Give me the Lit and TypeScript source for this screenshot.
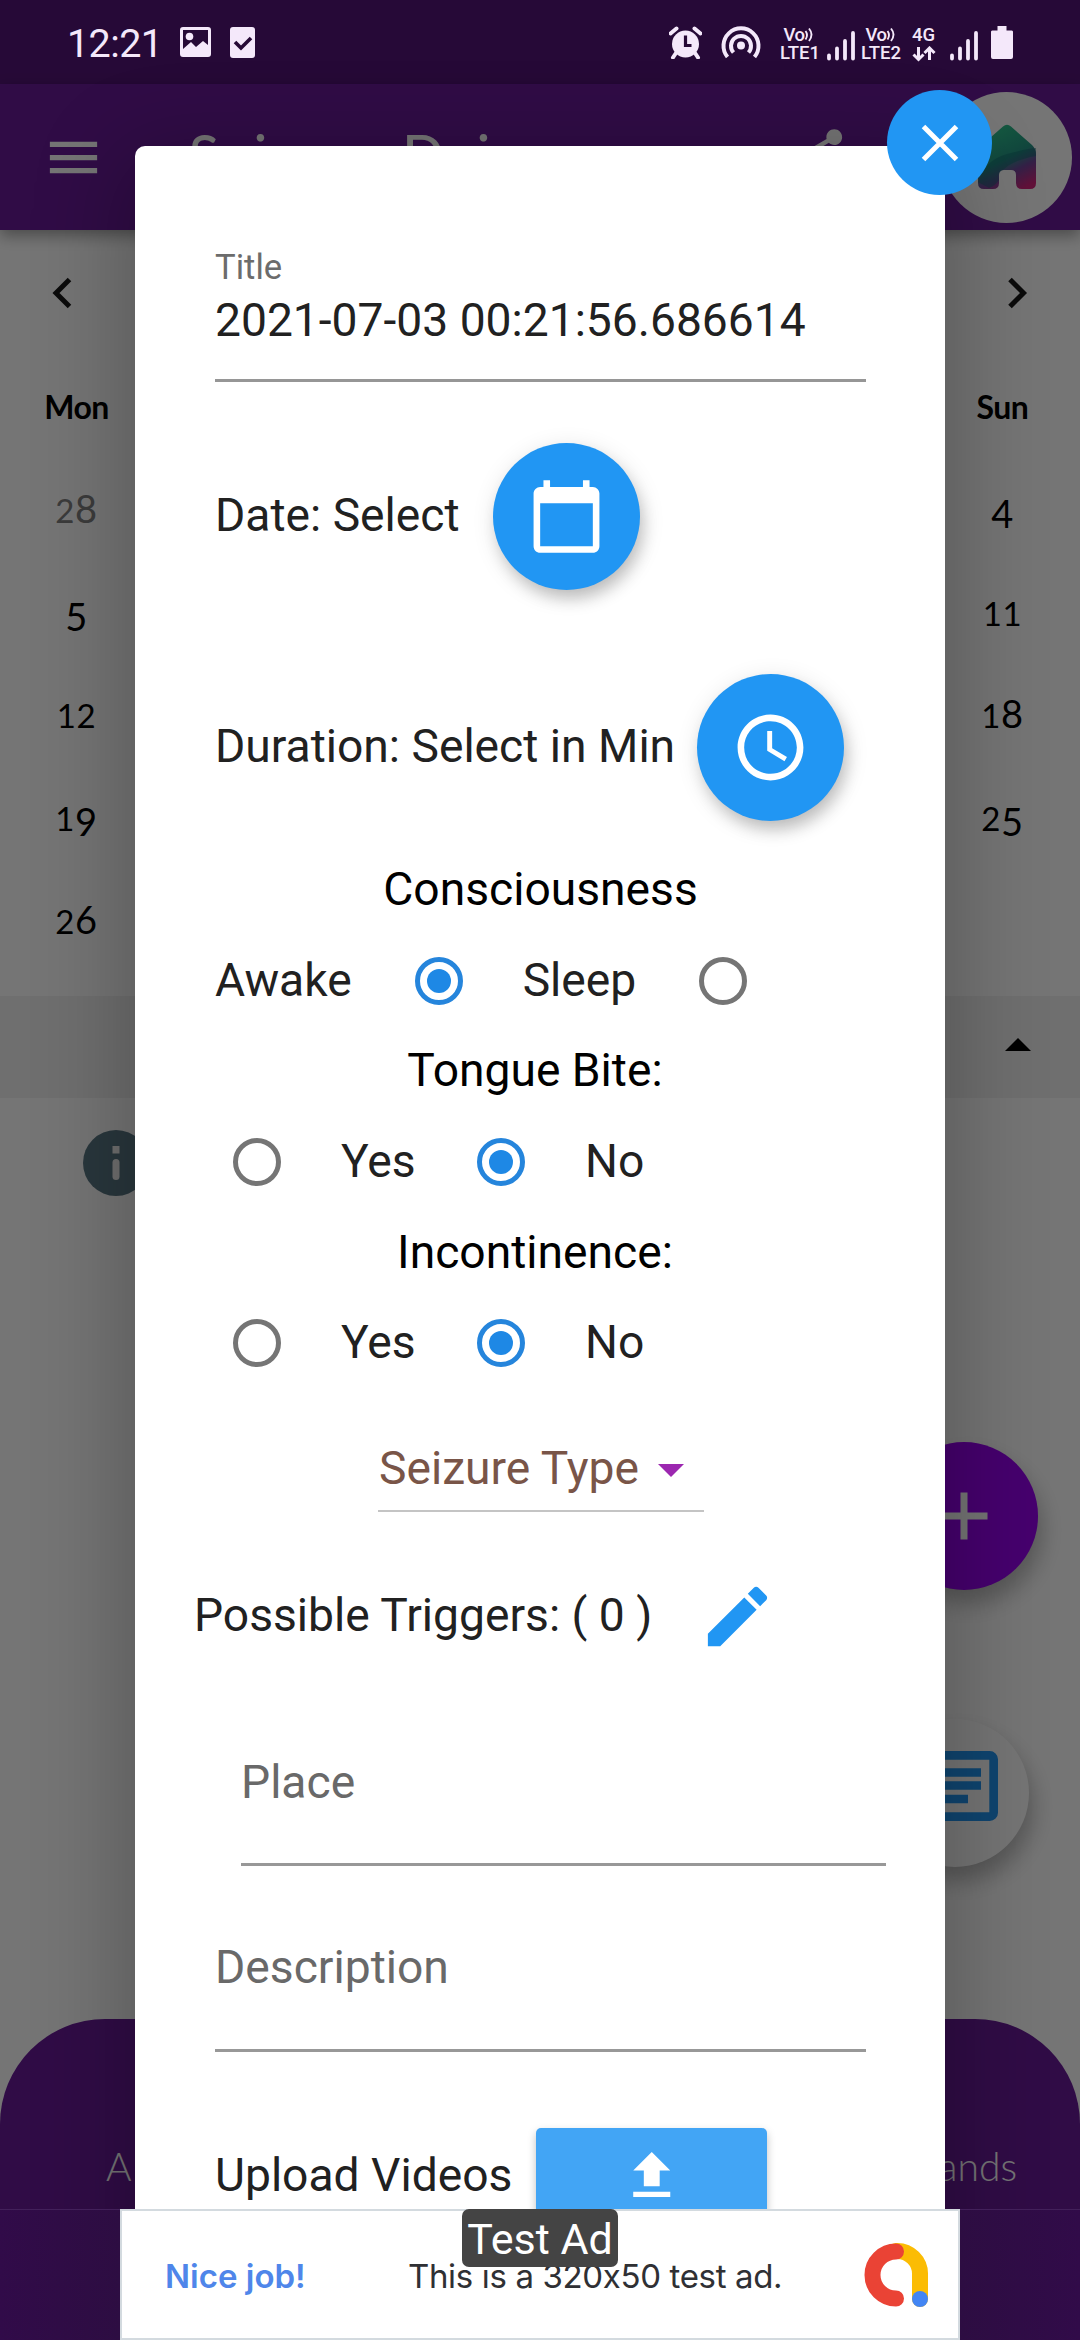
import { LitElement, html, css } from "lit";
import { customElement, property } from "lit/decorators.js";

const OLDSTYLE: Record<string, string> = {
  "0": "short", "1": "short", "2": "short",
  "3": "low", "4": "low", "5": "low", "7": "low", "9": "low",
};

/** Calendar day whose digits are set as old-style figures. */
@customElement("day-cell")
class DayCell extends LitElement {
  @property() value = "";
  @property({ type: Boolean }) muted = false;
  static styles = css`
    :host { display: block; height: 102.7px; text-align: center; font: 400 38px/102.7px Lato, "Open Sans", sans-serif; letter-spacing: 0.6px; color: #000; }
    .muted { color: #808080; }
    .short { font-size: 33px; line-height: 0; }
    .low { vertical-align: -5px; line-height: 0; }
  `;
  render() {
    return html`<div class=${this.muted ? "muted" : ""}>${[...this.value].map((d) => html`<span class=${OLDSTYLE[d] ?? "tall"}>${d}</span>`)}</div>`;
  }
}

@customElement("radio-dot")
class RadioDot extends LitElement {
  @property({ type: Boolean }) checked = false;
  static styles = css`
    :host { display: flex; width: 126px; height: 126px; align-items: center; justify-content: center; }
    .ring { box-sizing: border-box; width: 48px; height: 48px; border-radius: 50%; border: 5.4px solid #757575; display: flex; align-items: center; justify-content: center; }
    .on { border-color: #2585dc; }
    .dot { width: 24px; height: 24px; border-radius: 50%; background: #1e88e5; }
  `;
  render() {
    return html`<div class="ring ${this.checked ? "on" : ""}">${this.checked ? html`<div class="dot"></div>` : ""}</div>`;
  }
}

@customElement("status-icons")
class StatusIcons extends LitElement {
  static styles = css`
    :host { display: flex; height: 84px; box-sizing: border-box; padding: 0 67px 0 67px; color: #f4e8fa; font-family: Roboto, sans-serif; align-items: center; }
    .time { font-size: 39.5px; line-height: 84px; padding-top: 2px; width: 113px; letter-spacing: -0.6px; box-sizing: border-box; height: 84px; }
    svg { display: block; flex: none; }
    .gap { flex: 1; }
    .net { font-size: 18.5px; line-height: 18px; font-weight: 500; text-align: center; white-space: nowrap; padding-top: 3px; }
    .vo { display: flex; justify-content: center; letter-spacing: -0.6px; }
    .check { margin-left: 19px; }
    .spot { margin-left: 19px; }
    .battery { margin-left: 13px; }
    .lte1 { width: 38px; margin-left: 19px; }
    .lte2 { width: 42px; margin-left: 5px; }
    .data { width: 25px; margin-left: 9px; }
    .sig { margin-left: 9px; }
    .sig2 { margin-left: 14px; }
    .arrows { margin: 2px auto 0; }
  `;
  signal(cls: string) {
    return html`<svg class=${cls} width="28" height="40" viewBox="0 0 28 40" stroke="currentColor" stroke-width="3.8" stroke-linecap="round">
      <path d="M2 33.5v3M10 26.5v10M18 19v17.5M26 11v25.5"></path></svg>`;
  }
  vo() {
    return html`<div class="vo"><span>Vo</span><svg width="10" height="18" viewBox="0 0 10 18"><path d="M1.500 5q3 4 0 8.500M5 2.500q5 6 0 12.500" fill="none" stroke="currentColor" stroke-width="1.9"></path></svg></div>`;
  }
  render() {
    return html`
      <div class="time">12:21</div>
      <svg width="31" height="31" viewBox="0 0 31 31" fill="currentColor"><path fill-rule="evenodd" d="M3 0h25a3 3 0 0 1 3 3v24a3 3 0 0 1-3 3H3a3 3 0 0 1-3-3V3a3 3 0 0 1 3-3zM3 3v19l8-7 5 5 7-6 5 4V3z"></path><circle cx="9.500" cy="9.500" r="3.800"></circle></svg>
      <svg class="check" width="25" height="31" viewBox="0 0 25 31"><rect width="25" height="31" rx="3" fill="currentColor"></rect><path d="M5 15l6 6 10-10" fill="none" stroke="#270936" stroke-width="3.600"></path></svg>
      <div class="gap"></div>
      <svg width="33" height="33" viewBox="0 0 33 33"><circle cx="16.500" cy="18" r="13.500" fill="currentColor"></circle><path d="M1.500 7.500l6-5M31.500 7.500l-6-5M7 27l-3 4.500M26 27l3 4.500" stroke="currentColor" stroke-width="4" stroke-linecap="round"></path><path d="M16.500 9.500v10h6" fill="none" stroke="#270936" stroke-width="3.200"></path></svg>
      <svg class="spot" width="40" height="35" viewBox="0 0 40 35" fill="none" stroke="currentColor" stroke-width="4"><path d="M6.500 32a17.500 17.500 0 1 1 27 0M12.500 27.500a10 10 0 1 1 15 0"></path><circle cx="20" cy="20.500" r="4" fill="currentColor" stroke="none"></circle></svg>
      <div class="net lte1">${this.vo()}<div>LTE1</div></div>
      ${this.signal("sig")}
      <div class="net lte2">${this.vo()}<div>LTE2</div></div>
      <div class="net data"><div>4G</div>
        <svg class="arrows" width="24" height="16" viewBox="0 0 24 16" fill="none" stroke="currentColor" stroke-width="3"><path d="M6.500 1v12M1.500 8.500l5 5 5-5M17.500 14V3M12.500 7l5-5 5 5"></path></svg>
      </div>
      ${this.signal("sig2")}
      <svg class="battery" width="22" height="33" viewBox="0 0 22 33" fill="currentColor"><path d="M6.500 0h9v4.500H20a1.500 1.500 0 0 1 2 1.500v25a2 2 0 0 1-2 2H2a2 2 0 0 1-2-2V6a1.500 1.500 0 0 1 2-1.500h4.500z"></path></svg>
    `;
  }
}

@customElement("seizure-form")
class SeizureForm extends LitElement {
  static styles = css`
    :host { display: flex; flex-direction: column; box-sizing: border-box; width: 810px; height: 2194px; padding: 101px 79px 0 80px; background: #fff; border-radius: 10px; font: 400 46.2px/60px Roboto, sans-serif; color: #212121; white-space: nowrap; box-shadow: 0 20px 90px 14px rgba(0, 0, 0, 0.24); }
    svg { display: block; }
    .label { font-size: 34.65px; line-height: 40px; color: #6c6c6c; }
    .input { line-height: 60px; padding: 3px 0 29px; border-bottom: 3px solid #969696; }
    .row { display: flex; align-items: center; }
    .row > span { padding-bottom: 3px; }
    .round { width: 147px; height: 147px; border-radius: 50%; background: #2196f3; display: flex; align-items: center; justify-content: center; fill: #fff; box-shadow: 4px 10px 16px -2px rgba(0, 0, 0, 0.2), 2px 5px 24px rgba(0, 0, 0, 0.12); }
    .date { margin-top: 61px; }
    .date .round { margin-left: 33px; }
    .duration { margin-top: 84px; margin-bottom: 42px; }
    .duration .round { margin-left: 22px; }
    .heading { height: 55px; line-height: 53px; text-align: center; color: #000; }
    .nudge { padding-right: 11px; }
    .low { line-height: 54px; }
    .awake radio-dot { margin-left: 24px; }
    .awake .sleep { margin-left: 21px; }
    .yesno { margin-left: -21px; }
    .yesno .yes { margin-left: 21px; width: 97px; }
    .yesno .no { margin-left: 21px; }
    .select { align-self: flex-start; margin: 31px 0 0 163px; width: 325px; padding-left: 1px; display: flex; align-items: center; line-height: 62px; padding-bottom: 11px; border-bottom: 2px solid #c4c4c4; color: #795548; }
    .caret { border: 13px solid transparent; border-top-color: #9c27b0; border-bottom: 0; margin-left: 19px; margin-top: 5px; }
    .triggers { margin: 41px 0 0 -21px; height: 126px; }
    .triggers svg { margin-left: 46px; fill: #2196f3; }
    .field { line-height: 64px; border-bottom: 3px solid #989898; color: #696969; padding-bottom: 50px; }
    .place { margin: 71px -20px 0 26px; padding-bottom: 49px; }
    .description { margin-top: 69px; }
    .upload { margin-top: 76px; }
    .upload-btn { width: 231px; height: 96px; border-radius: 5px; background: #42a5f5; margin-left: 24px; display: flex; align-items: center; justify-content: center; fill: #fff; box-shadow: 0 4px 8px rgba(0, 0, 0, 0.25); }
  `;
  yesNo() {
    return html`<div class="row yesno"><radio-dot></radio-dot><span class="yes">Yes</span><radio-dot checked></radio-dot><span class="no">No</span></div>`;
  }
  render() {
    return html`
      <div class="label">Title</div>
      <div class="input">2021-07-03 00:21:56.686614</div>
      <div class="row date"><span>Date: Select</span>
        <div class="round"><svg width="79" height="79" viewBox="0 0 24 24"><path d="M20 3h-1V1h-2v2H7V1H5v2H4c-1.100 0-2 .9-2 2v16c0 1.100.9 2 2 2h16c1.100 0 2-.9 2-2V5c0-1.100-.9-2-2-2zm0 18H4V8h16v13z"></path></svg></div>
      </div>
      <div class="row duration"><span>Duration: Select in Min</span>
        <div class="round"><svg width="79" height="79" viewBox="0 0 24 24"><path d="M11.990 2C6.470 2 2 6.480 2 12s4.470 10 9.990 10C17.520 22 22 17.520 22 12S17.520 2 11.990 2zM12 20c-4.420 0-8-3.580-8-8s3.580-8 8-8 8 3.580 8 8-3.580 8-8 8zm.5-13H11v6l5.250 3.150.750-1.230-4.500-2.670z"></path></svg></div>
      </div>
      <div class="heading">Consciousness</div>
      <div class="row awake"><span>Awake</span><radio-dot checked></radio-dot><span class="sleep">Sleep</span><radio-dot></radio-dot></div>
      <div class="heading nudge">Tongue Bite:</div>
      ${this.yesNo()}
      <div class="heading nudge low">Incontinence:</div>
      ${this.yesNo()}
      <div class="select"><span>Seizure Type</span><div class="caret"></div></div>
      <div class="row triggers"><span>Possible Triggers: ( 0 )</span>
        <svg width="79" height="79" viewBox="0 0 24 24"><path d="M3 17.250V21h3.750L17.810 9.940l-3.750-3.750L3 17.250zM20.710 7.040c.39-.39.39-1.020 0-1.410l-2.340-2.340c-.39-.39-1.020-.39-1.410 0l-1.830 1.830 3.750 3.750 1.830-1.830z"></path></svg>
      </div>
      <div class="field place">Place</div>
      <div class="field description">Description</div>
      <div class="row upload"><span>Upload Videos</span>
        <div class="upload-btn"><svg width="63.500" height="63.500" viewBox="0 0 24 24"><path d="M9 16h6v-6h4l-7-7-7 7h4zm-4 2h14v2H5z"></path></svg></div>
      </div>
    `;
  }
}

@customElement("test-ad")
class TestAd extends LitElement {
  static styles = css`
    :host { display: block; position: relative; box-sizing: border-box; width: 840px; height: 131px; background: #fff; border: 2px solid #d3dadf; font-family: Inter, Roboto, sans-serif; white-space: nowrap; }
    .row { display: flex; align-items: center; height: 100%; padding-left: 43px; }
    .nice { font-size: 33px; font-weight: 600; color: #4f86ea; width: 243px; letter-spacing: 0; padding-top: 2px; }
    .copy { font-size: 33px; color: #2f3034; letter-spacing: -0.35px; flex: 1; padding-top: 2px; }
    .logo { margin-right: 29px; flex: none; }
    .badge { position: absolute; left: 340px; top: -2px; width: 156px; height: 58px; border-radius: 7px; background: #444; color: #fff; font: 400 43px/60px Roboto, sans-serif; text-align: center; }
  `;
  render() {
    return html`
      <div class="row">
        <div class="nice">Nice job!</div>
        <div class="copy">This is a 320x50 test ad.</div>
        <svg class="logo" width="66" height="66" viewBox="0 0 66 66" fill="none" stroke-width="16" stroke-linecap="round">
          <path d="M33 9a23 23 0 0 1 24 24v24" stroke="#fbbc04"></path>
          <path d="M33 9.500a23.500 23.500 0 1 0 0 47" stroke="#ea4335"></path>
          <circle cx="57" cy="57" r="8" fill="#4285f4"></circle>
        </svg>
      </div>
      <div class="badge">Test Ad</div>
    `;
  }
}

@customElement("app-root")
class AppRoot extends LitElement {
  static styles = css`
    :host { display: block; position: relative; width: 1080px; height: 2340px; overflow: hidden; background: #fff; font-family: Lato, "Open Sans", sans-serif; }
    svg { display: block; }
    .page { display: flex; flex-direction: column; height: 2340px; }
    .statusbg { height: 84px; background: #541578; flex: none; }
    .appbar { height: 146px; box-sizing: border-box; flex: none; background: #6a1b9a; display: flex; align-items: center; box-shadow: 0 6px 14px rgba(0, 0, 0, 0.35); color: #fff; padding-left: 42px; }
    .title { margin-left: 84px; width: 598px; font-size: 55px; font-weight: 500; line-height: 60px; letter-spacing: 2.9px; padding-bottom: 7px; white-space: nowrap; }
    .share { width: 63px; margin-bottom: 4px; }
    .avatar { width: 131px; height: 131px; border-radius: 50%; background: #fff; margin: 0 8px 0 auto; display: flex; align-items: center; justify-content: center; }
    .nav { height: 126px; display: flex; justify-content: space-between; padding: 0 45px 0 45px; align-items: center; }
    .cal { display: flex; justify-content: space-between; padding-right: 1px; }
    .col { width: 153px; }
    .wd { height: 101px; line-height: 101px; text-align: center; font-size: 32px; font-weight: 700; letter-spacing: -0.5px; }
    .panel { margin-top: 26px; height: 102px; background: #f1f1f1; display: flex; align-items: center; justify-content: flex-end; padding-right: 49px; }
    .up { border: 13.5px solid transparent; border-bottom-color: #000; border-top: 0; margin-top: -6px; }
    .info { margin: 32px 0 0 83px; }
    .grow { flex: 1; }
    .tabs { height: 321px; box-sizing: border-box; border-radius: 105px 105px 0 0; background: #6a1b9a; display: flex; justify-content: space-between; padding: 121px 63px 0 106px; color: #fff; font-size: 39px; font-weight: 300; line-height: 52px; }
    .fab { position: absolute; width: 148px; height: 148px; border-radius: 50%; display: flex; align-items: center; justify-content: center; box-shadow: 4px 14px 22px rgba(0, 0, 0, 0.26); }
    .add { left: 890px; top: 1442px; background: #9a00f0; }
    .chat { left: 881px; top: 1719px; background: #fff; padding-bottom: 14px; box-sizing: border-box; }
    .scrim { position: absolute; inset: 0; background: rgba(0, 0, 0, 0.54); }
    .status { position: absolute; inset: 0 0 auto 0; }
    .dialog { position: absolute; left: 135px; top: 146px; }
    .close { position: absolute; left: 887px; top: 90px; width: 105px; height: 105px; border-radius: 50%; background: #2196f3; display: flex; align-items: center; justify-content: center; }
    .foot { position: absolute; left: 0; right: 0; bottom: 0; height: 131px; display: flex; justify-content: center; background: linear-gradient(90deg, #310b49, #2d0d42 120px, #2d0d42 960px, #310b49); box-shadow: 0 1px 0 #42205a inset; }
  `;
  render() {
    const mon = ["28", "5", "12", "19", "26"];
    const sun = ["4", "11", "18", "25"];
    return html`
      <div class="page">
        <div class="statusbg"></div>
        <div class="appbar">
          <svg width="63" height="63" viewBox="0 0 24 24" fill="#fff"><path d="M3 18h18v-2H3v2zm0-5h18v-2H3v2zm0-7v2h18V6H3z"></path></svg>
          <div class="title">Seizure Dairy</div>
          <svg class="share" width="63" height="63" viewBox="0 0 24 24" fill="#fff"><path d="M18 16.080c-.76 0-1.440.3-1.960.77L8.910 12.700c.05-.23.09-.46.09-.7s-.04-.47-.09-.7l7.050-4.110c.54.5 1.250.81 2.040.81 1.660 0 3-1.340 3-3s-1.340-3-3-3-3 1.340-3 3c0 .24.04.47.09.7L8.040 9.810C7.500 9.310 6.790 9 6 9c-1.660 0-3 1.340-3 3s1.340 3 3 3c.79 0 1.500-.31 2.040-.81l7.120 4.160c-.05.21-.08.43-.08.65 0 1.610 1.310 2.920 2.920 2.920s2.920-1.310 2.920-2.920-1.310-2.920-2.920-2.920z"></path></svg>
          <div class="avatar"><svg width="60" height="66" viewBox="0 0 60 66">
            <defs>
              <linearGradient id="g" x1="0.3" y1="0" x2="0.75" y2="1"><stop offset="0" stop-color="#2fc48c"></stop><stop offset=".5" stop-color="#279a87"></stop><stop offset=".72" stop-color="#71479b"></stop><stop offset="1" stop-color="#d4257c"></stop></linearGradient>
            </defs>
            <path d="M26 2.500q4-3.500 8 0L55 21q4 4 4 9v29q0 6-6 6H45q-6 0-6-6V51q0-5-5-5h-7q-5 0-5 5v8q0 6-6 6H7q-6 0-6-6V30q0-5 4-9z" fill="url(#g)"></path>
            <path d="M1 58Q8 36 30 30T59 24v8Q36 36 26 46q-6 2-4 10-4 6-10 8z" fill="#126a70" opacity=".45"></path>
          </svg></div>
        </div>
        <div class="nav">
          <svg width="36" height="36" viewBox="0 0 36 36" fill="none" stroke="#1a1a1a" stroke-width="5"><path d="M24.500 4.500L11 18l13.500 13.500"></path></svg>
          <svg width="36" height="36" viewBox="0 0 36 36" fill="none" stroke="#1a1a1a" stroke-width="5"><path d="M11 4.500L24.500 18 11 31.500"></path></svg>
        </div>
        <div class="cal">
          <div class="col"><div class="wd">Mon</div>${mon.map((d, i) => html`<day-cell value=${d} ?muted=${i === 0}></day-cell>`)}</div>
          <div class="col"><div class="wd">Sun</div>${sun.map((d) => html`<day-cell value=${d}></day-cell>`)}</div>
        </div>
        <div class="panel"><div class="up"></div></div>
        <svg class="info" width="66" height="66" viewBox="0 0 66 66"><circle cx="33" cy="33" r="33" fill="#5b7885"></circle><path d="M29.500 16h7v7.500h-7z" fill="#f2f2f2"></path><rect x="29.500" y="29" width="7" height="21" rx="3.500" fill="#f2f2f2"></rect></svg>
        <div class="grow"></div>
        <div class="tabs"><span>A</span><span>ands</span></div>
      </div>
      <div class="fab add"><svg width="50" height="50" viewBox="0 0 50 50" stroke="#fff" stroke-width="7"><path d="M25 1.500v47M1.500 25h47"></path></svg></div>
      <div class="fab chat"><svg width="86" height="70" viewBox="0 0 86 70" fill="none" stroke="#2196f3" stroke-width="8.700"><rect x="4.350" y="4.350" width="77.300" height="61.300" rx="4"></rect><path d="M17 21.500h52M17 34.500h52M17 48h39"></path></svg></div>
      <div class="scrim"></div>
      <div class="status"><status-icons></status-icons></div>
      <seizure-form class="dialog"></seizure-form>
      <div class="close"><svg width="40" height="40" viewBox="0 0 40 40" stroke="#fff" stroke-width="5"><path d="M3.500 3.500l33 33M36.500 3.500l-33 33"></path></svg></div>
      <div class="foot"><test-ad></test-ad></div>
    `;
  }
}
